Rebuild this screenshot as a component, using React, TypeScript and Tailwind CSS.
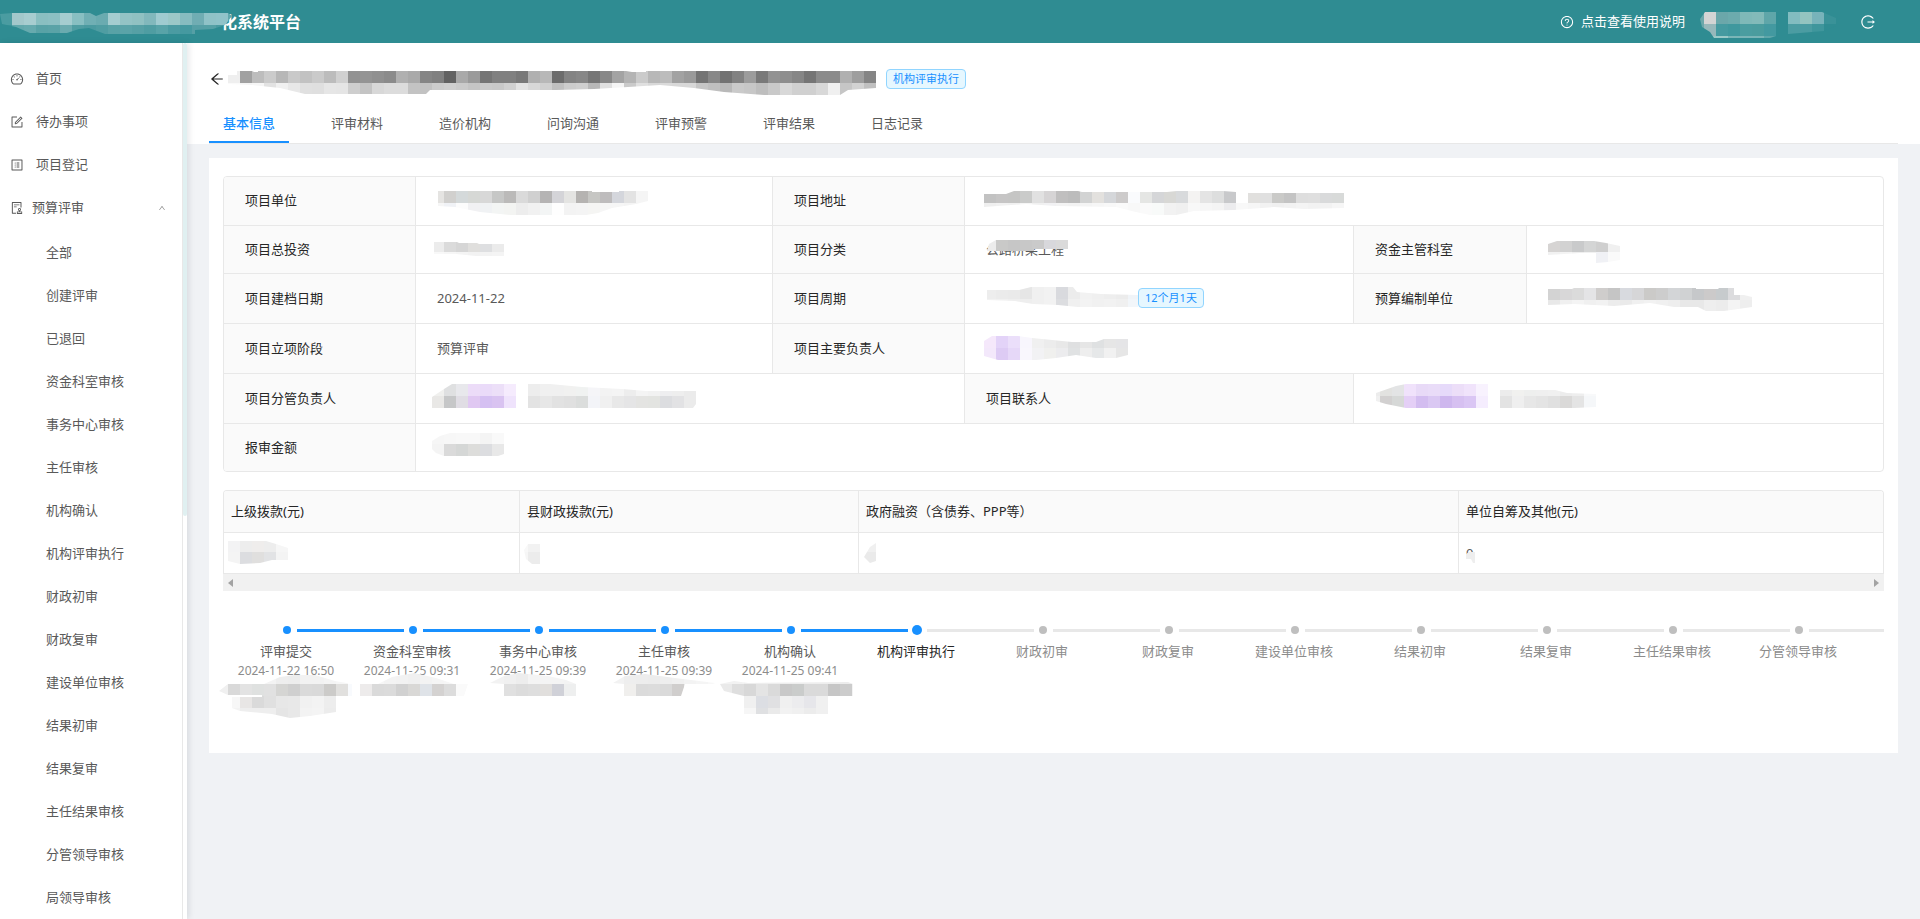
import { useId, useState } from "react";
import type { ReactNode } from "react";
import {
  AiOutlineArrowLeft,
  AiOutlineAudit,
  AiOutlineDashboard,
  AiOutlineForm,
  AiOutlineLogout,
  AiOutlineProfile,
  AiOutlineQuestionCircle,
  AiOutlineUp,
} from "react-icons/ai";

const CELL = 12;

interface MosaicRow {
  x: number;
  y: number;
  colors: string;
}

interface MosaicProps {
  x: number;
  y: number;
  width: number;
  height?: number;
  rows: MosaicRow[];
  outline: string;
  className?: string;
}

// two digits are a shade of grey, six digits a full colour
const toFill = (color: string) =>
  `#${color.length === 2 ? color.repeat(3) : color}`;

const Mosaic = ({
  x,
  y,
  width,
  height = 40,
  rows,
  outline,
  className = "",
}: MosaicProps) => {
  const id = useId();
  return (
    <svg
      width={width}
      height={height}
      viewBox={`${x} ${y} ${width} ${height}`}
      shapeRendering="crispEdges"
      aria-hidden="true"
      className={`block shrink-0 overflow-visible ${className}`}
    >
      <clipPath id={id}>
        <path d={outline} />
      </clipPath>
      <g clipPath={`url(#${id})`}>
        {rows.map((row) =>
          row.colors
            .split(" ")
            .map((color, i) => (
              <rect
                key={`${row.y}-${i}`}
                x={row.x + i * CELL}
                y={row.y}
                width={CELL}
                height={CELL}
                fill={toFill(color)}
              />
            ))
        )}
      </g>
    </svg>
  );
};

const subMenu = [
  "全部",
  "创建评审",
  "已退回",
  "资金科室审核",
  "事务中心审核",
  "主任审核",
  "机构确认",
  "机构评审执行",
  "财政初审",
  "财政复审",
  "建设单位审核",
  "结果初审",
  "结果复审",
  "主任结果审核",
  "分管领导审核",
  "局领导审核",
];

const tabs = [
  "基本信息",
  "评审材料",
  "造价机构",
  "问询沟通",
  "评审预警",
  "评审结果",
  "日志记录",
];

interface StepValues {
  title: string;
  date?: string;
  status: "finish" | "process" | "wait";
  operator?: ReactNode;
}

const steps: StepValues[] = [
  {
    title: "评审提交",
    date: "2024-11-22 16:50",
    status: "finish",
    operator: (
      <Mosaic
        x={223}
        y={681}
        width={126}
        rows={[
          { x: 252, y: 672, colors: "f5 f3 ee ed f2 f2 f4 f6" },
          { x: 216, y: 684, colors: "f0 d9 e3 dfe1e0 e1 d5d5d3 cf da d9 cccbc9 e1e0de f8fafd" },
          { x: 228, y: 696, colors: "f7 e8e6e5 da e0 e7 e8 f1 f3 ed e0dfdd eeeff0" },
          { x: 228, y: 708, colors: "f3 ee ee ee e5 e8 f3 f4 ec ea f8f9fb" },
        ]}
        outline="M219 691L228 684H264L280 677L295 675H315L335 681L352 684V696H336V712L310 716L290 718L272 714L240 711L232 708V697H262V695H228Z"
      />
    ),
  },
  {
    title: "资金科室审核",
    date: "2024-11-25 09:31",
    status: "finish",
    operator: (
      <Mosaic
        x={349}
        y={681}
        width={126}
        rows={[
          { x: 372, y: 672, colors: "f6 f3 f2 f0 f3 f5 f6" },
          { x: 360, y: 684, colors: "edebeb da db d1 d9d8d6 dfe3e8 d4d2d1 dc fa" },
        ]}
        outline="M360 684h18l14-7 22-4 22 5 18 6h14l-4 12H360z"
      />
    ),
  },
  {
    title: "事务中心审核",
    date: "2024-11-25 09:39",
    status: "finish",
    operator: (
      <Mosaic
        x={475}
        y={681}
        width={126}
        rows={[
          { x: 480, y: 672, colors: "f2 f2 f0 ed f4 f4 f4 f3 f5" },
          { x: 504, y: 684, colors: "e0 dc de e1dfdd d0d1d8 eeefef" },
        ]}
        outline="M490 683l14-7 14-3 30 3 18 4 10 4v12h-72v-12z"
      />
    ),
  },
  {
    title: "主任审核",
    date: "2024-11-25 09:39",
    status: "finish",
    operator: (
      <Mosaic
        x={601}
        y={681}
        width={126}
        rows={[
          { x: 612, y: 672, colors: "f2 ee ed ec ee f0 f3 f5 f8" },
          { x: 624, y: 684, colors: "f0efed db dc da d0cecd e8 f4" },
        ]}
        outline="M613 683l12-7 20-2 30 4 40 5-2 1h-28l-4 12h-57v-12z"
      />
    ),
  },
  {
    title: "机构确认",
    date: "2024-11-25 09:41",
    status: "finish",
    operator: (
      <Mosaic
        x={727}
        y={681}
        width={126}
        rows={[
          { x: 720, y: 672, colors: "f2 f2 ee ee ee ee ee ee ee ee ec ec" },
          { x: 720, y: 684, colors: "ea de d8 e4 da c8 cacccb da da c6 cc f3" },
          { x: 744, y: 696, colors: "f0 dcdee3 e0e0e2 f0 ececee e6e6ea f0" },
          { x: 744, y: 708, colors: "f6 dfe0e2 ea f2 f0 ec f0" },
        ]}
        outline="M720 684l14-3 14 2 100-1 5 2v12h-25v18h-84v-18l-20-5z"
      />
    ),
  },
  { title: "机构评审执行", status: "process" },
  { title: "财政初审", status: "wait" },
  { title: "财政复审", status: "wait" },
  { title: "建设单位审核", status: "wait" },
  { title: "结果初审", status: "wait" },
  { title: "结果复审", status: "wait" },
  { title: "主任结果审核", status: "wait" },
  { title: "分管领导审核", status: "wait" },
];

const titleColor = {
  finish: "text-[#595959]",
  process: "text-[#262626]",
  wait: "text-[#8c8c8c]",
};

const dotColor = {
  finish: "bg-[#1890ff]",
  process: "bg-[#1890ff]",
  wait: "bg-[#bfbfbf]",
};

const lineColor = {
  finish: "bg-[#1890ff]",
  process: "bg-[#e8e8e8]",
  wait: "bg-[#e8e8e8]",
};

const Tag = ({ children }: { children: ReactNode }) => (
  <span className="h-5 px-[6px] rounded-sm border border-[#91d5ff] bg-[#e6f7ff] text-[11px] leading-[18px] text-[#1890ff] whitespace-nowrap">
    {children}
  </span>
);

const Label = ({ colSpan, children }: { colSpan?: number; children: ReactNode }) => (
  <th
    scope="row"
    colSpan={colSpan}
    className="px-[21px] pb-[2px] text-left font-normal text-[#262626] bg-[#fafafa] border-r border-b border-[#e8e8e8]"
  >
    {children}
  </th>
);

const Value = ({ colSpan, children }: { colSpan?: number; children: ReactNode }) => (
  <td
    colSpan={colSpan}
    className="px-[21px] pb-[2px] text-[#595959] border-r border-b border-[#e8e8e8] last:border-r-0"
  >
    {children}
  </td>
);

const Header = () => (
  <header className="flex items-center justify-between h-[43px] shrink-0 bg-[#2f8c92] text-white">
    <div className="flex items-center">
      <Mosaic
        x={0}
        y={1}
        width={221}
        className="relative"
        rows={[
          {
            x: 0,
            y: 12,
            colors:
              "4a9ca1 a3c8cb a8cdd0 8abfc1 8cc0c3 a5cdd0 88bfc2 70afb4 6aabb0 a5cdd0 93c3c5 90c1c2 82b8bc a0cbd0 9bc8c8 87bcc0 70adb3 8fc2c7 90c3c9 5fa8ad",
          },
          {
            x: 0,
            y: 24,
            colors:
              "3c949a 62a8ac 66aaae 58a2a6 5aa3a7 6aabaf 4f9da2 4a9aa0 4f9da2 58a2a6 5aa3a8 56a0a5 4f9da2 58a3a8 4b9ba2 4599a0 559fa5 55a0a5 4a9aa0 3c949a",
          },
        ]}
        outline="M0 13l12-1h78l6 3 8-3h124l4 3-7 9-12 4-18 1v4h-90l-16-6-10 1-12 4H30l-14-6-14-3z"
      />
      <h1 className="text-[16px] leading-6 font-bold">化系统平台</h1>
    </div>
    <div className="flex items-center pr-[44px]">
      <a href="#help" className="flex items-center gap-[7px] text-[13px]">
        <AiOutlineQuestionCircle className="size-[14px]" />
        点击查看使用说明
      </a>
      <Mosaic
        x={1685}
        y={2}
        width={175}
        rows={[
          {
            x: 1692,
            y: 12,
            colors: "6ba7aa d4d4d4 6ba7aa 6cabad 7fb9b8 82bab9 5fa6a9 2f8c92 82bcc0 94c4c0 78b3ba 3a9298",
          },
          {
            x: 1692,
            y: 24,
            colors: "6ba7aa 97b8bb 459aa0 3f989e 4a9da0 4a9c9e 4399a0 2f8c92 4b9ca2 4b9ca2 3f969c 2f8c92",
          },
          { x: 1704, y: 36, colors: "9ccac8 9ccac8 7ab5b7 7ab5b7 7ab5b7 5fa6a9" },
        ]}
        outline="M1700 19l5-7h71v24l-6 2h-56l-4-6-8-5zM1788 12h34l14 6v8l-12 5-36 3z"
      />
      <button type="button" aria-label="退出登录">
        <AiOutlineLogout className="size-4" />
      </button>
    </div>
  </header>
);

const Sidebar = () => {
  const [isOpen, setIsOpen] = useState<boolean>(true);
  const itemClass = "flex items-center gap-3 h-[43px] pl-[10px]";

  return (
    <aside className="relative z-10 flex w-[187px] shrink-0 bg-white shadow-[2px_0_6px_rgba(0,21,41,0.1)]">
      <nav className="flex-1 pt-[14px] overflow-hidden border-r border-[#e8e8e8] text-[13px] text-[#595959]">
        <a href="#home" className={itemClass}>
          <AiOutlineDashboard className="size-[14px]" />
          首页
        </a>
        <a href="#todo" className={itemClass}>
          <AiOutlineForm className="size-[14px]" />
          待办事项
        </a>
        <a href="#register" className={itemClass}>
          <AiOutlineProfile className="size-[14px]" />
          项目登记
        </a>
        <button
          type="button"
          aria-expanded={isOpen}
          onClick={() => setIsOpen(!isOpen)}
          className="flex items-center gap-2 w-full h-[43px] pl-[10px] pr-4"
        >
          <AiOutlineAudit className="size-[14px]" />
          预算评审
          <AiOutlineUp className="size-2 ml-auto text-[#8c8c8c]" />
        </button>
        {isOpen && (
          <ul className="pt-[2px]">
            {subMenu.map((item) => (
              <li key={item}>
                <a href={`#${item}`} className="flex items-center h-[43px] pl-[46px]">
                  {item}
                </a>
              </li>
            ))}
          </ul>
        )}
      </nav>
      <div className="w-1">
        <div className="h-[54%] rounded-sm bg-[#e0f0f1]" />
      </div>
    </aside>
  );
};

const PageHeader = () => {
  const [activeTab, setActiveTab] = useState<string>(tabs[0]);

  return (
    <div className="px-[22px] pt-[26px] bg-white">
      <div className="flex items-center h-5">
        <button type="button" aria-label="返回" className="text-[#262626]">
          <AiOutlineArrowLeft className="size-4" />
        </button>
        <Mosaic
          x={225}
          y={60}
          width={661}
          rows={[
            {
              x: 228,
              y: 72,
              colors:
                "ef a1 bd cb b7 c9 c2 ca bc d0 92 94 90 8b b0 a9 85 80 62 a9 9a 75 80 80 78 b0 b8 6c 83 87 76 88 a3 b4 cb b8 bc a2 9a 74 88 72 82 9c 79 92 8e 86 75 8b 8b b0 9e 85",
            },
            {
              x: 228,
              y: 84,
              colors:
                "fa f4 f6 e2 f0 e8 e0 df e6 e5 ce c4 d8 dc dc c3 c2 cc cf cb c5 ca c8 d0 e2 d8 d0 c0 cc cf b8 e0 f5 ca e0 d8 da d8 d8 c6 c0 b9 ca c7 be c9 d8 d0 d0 d8 f0 c6 d2 c0",
            },
          ]}
          outline="M228 76h9v-4h15l2 1h4v-1h368l6 1h14v-1h230v17l-28 2-8 5h-76l-40-3-30-4-34-3-32 2-34 2-38 1H430l-4 4H305l-25-6-28-3-24-1z"
        />
        <Tag>机构评审执行</Tag>
      </div>
      <div role="tablist" className="flex gap-7 mt-[17px] border-b border-[#e8e8e8] text-[13px]">
        {tabs.map((tab) => (
          <button
            key={tab}
            type="button"
            role="tab"
            aria-selected={tab === activeTab}
            onClick={() => setActiveTab(tab)}
            className={`h-[37px] px-[14px] border-b-2 ${
              tab === activeTab
                ? "border-[#1890ff] text-[#1890ff] font-medium"
                : "border-transparent text-[#595959]"
            }`}
          >
            {tab}
          </button>
        ))}
      </div>
    </div>
  );
};

const ProjectInfo = () => (
  <div className="rounded-sm border border-[#e8e8e8] overflow-hidden">
    <table className="w-full table-fixed border-separate border-spacing-0 text-[13px] leading-5">
      <colgroup>
        <col className="w-[192px]" />
        <col className="w-[357px]" />
        <col className="w-[192px]" />
        <col className="w-[389px]" />
        <col className="w-[173px]" />
        <col className="w-[356px]" />
      </colgroup>
      <tbody>
        <tr className="h-[49px]">
          <Label>项目单位</Label>
          <Value>
            <Mosaic
              x={437}
              y={181}
              width={216}
              rows={[
                { x: 432, y: 192, colors: "e5e4e2 d1d0ce d4d9da d6d8d5 d8 c6c7c6 bbbab9 da d0 b5b4b4 d4d4d8 e4e4e2 b5b3b1 c6c6c3 bebcbd d4d6dc e3 f5" },
                { x: 432, y: 204, colors: "f6 f0f2f6 fc f1f1f3 f0f2f4 f3f5f4 f3f4f2 ed f1 f3f5f5 fe f3 f4 f5f5f3 f6 f6 f4 f4" },
              ]}
              outline="M438 192h154v1h27v-1h29v10l-12 3-24 4-14 5-18 3h-60l-40-4-25-5-17-1z"
            />
          </Value>
          <Label>项目地址</Label>
          <Value colSpan={3}>
            <Mosaic
              x={986}
              y={181}
              width={360}
              rows={[
                { x: 984, y: 192, colors: "c2 c6c5c5 c5c5c4 cacbca e1 d6d4d5 c0bfbf bc d2d3d3 e3e1de d5d7da cdcbcb fafbfd e5e6e4 d5d6d8 d8d8d5 d8dadc f4f3f2 e4 dddede c8c9cb ff e1e0de e0 cacac8 c4 de df d9dadb d8dad9" },
                { x: 984, y: 204, colors: "ef f1 f0 f5 f0 f1f1f3 f3 f2 f4 f6 f8 fa f8 fa f8faf9 f2 f0 f8 f6 f4 ececee f8 f6 f2 f0 f2 f4 f2 f2 f6" },
              ]}
              outline="M984 195h22l8-3h64l4 1h85l10-1h46l26 2h95v15l-40 1-30-2-40 3-40 1-18 4h-26l-14-3-20-5-60-1-30-2L984 208z"
            />
          </Value>
        </tr>
        <tr className="h-12">
          <Label>项目总投资</Label>
          <Value>
            <Mosaic
              x={437}
              y={229}
              width={72}
              rows={[
                { x: 432, y: 240, colors: "ec db d6 e0dfdd dedfe1 eb" },
                { x: 432, y: 252, colors: "f8 f6 f4 f2 f3 f4" },
              ]}
              outline="M434 242h23l2 1h18l2 1h25v12h-28l-20-2h-22z"
            />
          </Value>
          <Label>项目分类</Label>
          <Value>
            <div className="relative">
              公路桥梁工程
              <div className="absolute inset-0">
                <Mosaic
                  x={986}
                  y={239}
                  width={84}
                  height={20}
                  rows={[{ x: 984, y: 239, colors: "ec c9c9c8 c6 c8 ca d8d8dc da e0e1e3" }]}
                  outline="M987 251l2-7 7-4h72v9h-34v2h-36z"
                />
              </div>
            </div>
          </Value>
          <Label>资金主管科室</Label>
          <Value>
            <Mosaic
              x={1548}
              y={229}
              width={72}
              rows={[
                { x: 1548, y: 240, colors: "d6d4d3 d2 c9cacb d4d5d5 cf f0" },
                { x: 1548, y: 252, colors: "f1 f3 ee f1 f0f1f5 fa" },
              ]}
              outline="M1548 244l9-3h37l12 2 14 3v14l-12 2-12 1v-10h-16l-32 2z"
            />
          </Value>
        </tr>
        <tr className="h-[50px]">
          <Label>项目建档日期</Label>
          <Value>2024-11-22</Value>
          <Label>项目周期</Label>
          <Value>
            <div className="flex items-center">
              <Mosaic
                x={986}
                y={279}
                width={152}
                rows={[
                  { x: 984, y: 288, colors: "ed eb ea e6 f0 f2 d9dade ec f2 f0 ee ec f0f4f8" },
                  { x: 984, y: 300, colors: "f2 f1 ef ee f0 f2 dcdde0 f0 f3 f1 f2 f0 f2f6fa" },
                ]}
                outline="M987 291h32l12-3h42l4 5 24 2 37 1v12h-60l-20-2-25-1-18-3-28-1z"
              />
              <Tag>12个月1天</Tag>
            </div>
          </Value>
          <Label>预算编制单位</Label>
          <Value>
            <Mosaic
              x={1548}
              y={278}
              width={204}
              rows={[
                { x: 1548, y: 288, colors: "d3 d8d7d8 db e4e4e6 cfcdcc c5 d8dadf d6d6d8 cbcac8 cd d3d5d7 d0d2d3 c6c8ca cccaca c7cbcd dcdcde f0" },
                { x: 1548, y: 300, colors: "e8 f0 f4 f0 f2 ec ea f0 f2 f0 ee e8 e8 ee ec f4 ee" },
              ]}
              outline="M1548 289h24l2-1h122v1h22l1-1h15v7h10l8 2v10l-14 2-14 2h-18l-8-4h-24l-24-4-36 3-40-2-26 1z"
            />
          </Value>
        </tr>
        <tr className="h-[50px]">
          <Label>项目立项阶段</Label>
          <Value>预算评审</Value>
          <Label>项目主要负责人</Label>
          <Value colSpan={3}>
            <Mosaic
              x={986}
              y={328}
              width={144}
              rows={[
                { x: 984, y: 336, colors: "f5e8fb e3d3f8 ebdffa f8f6fd f0 ec e8 dfe0e1 e6 dfe1e2 e6 e5e5e7" },
                { x: 984, y: 348, colors: "f3e8fb ddcbf4 e6d8f8 f9f7fd f2f2f4 f0f0ee ececee e0e2e3 ee e6e8e9 f1 e6" },
              ]}
              outline="M984 341l8-5h26l14 2 20 2 20 2h24l8-3h24v16l-12 3h-20l-20-3-20 3-20 2h-38l-14-4z"
            />
          </Value>
        </tr>
        <tr className="h-[50px]">
          <Label>项目分管负责人</Label>
          <Value colSpan={2}>
            <Mosaic
              x={437}
              y={378}
              width={264}
              rows={[
                { x: 432, y: 384, colors: "f0f0ee dfe0e1 e8e8ec ecdcf8 eadbf9 ecdff8 f5ebfd ff ed f0 f0 f1f1f0 f0f2f1 f5f5f8 f3 f4 ed f4 f2 eeeef0 ee eb" },
                { x: 432, y: 396, colors: "e9e8e6 c6c7c8 e0dde4 e0c8f2 d5c0f2 d9c3f1 efe3fc ff e3 e7 e2 e0 dbdddc f3f4f8 f0 e8 e5e5e6 e4e4e2 e3e4e1 dcdde0 e2e2e4 eb" },
              ]}
              outline="M432 397l12-8 8-5h98l32 3 40 2 24 2h50v13l-3 4H432z"
            />
          </Value>
          <Label>项目联系人</Label>
          <Value colSpan={2}>
            <Mosaic
              x={1375}
              y={378}
              width={224}
              rows={[
                { x: 1368, y: 384, colors: "ec e2e2e0 e3e4e5 f0e2fb e8daf7 e9dcf8 e6dafa ecdef8 f0e3fb f8f2fe ff ec f1f1ef eeefee ef f0 ec ee f8f9fa" },
                { x: 1368, y: 396, colors: "f0 d2d0d0 d6d8d7 e4cff6 d3bdf0 dac8f3 ceb7ee d6c0f1 dac6f4 f5edfe ff e3 ef e7 e4 e0 dad9d8 e4 f5f7f9" },
              ]}
              outline="M1376 393l20-7 10-2h84v6h65l12 3 29 1v13l-22 1h-168l-20-4-10-3z"
            />
          </Value>
        </tr>
        <tr className="h-[47px] [&>*]:border-b-0">
          <Label>报审金额</Label>
          <Value colSpan={5}>
            <Mosaic
              x={437}
              y={427}
              width={72}
              rows={[
                { x: 432, y: 432, colors: "f6 f7 f8 f8 f4 f9" },
                { x: 432, y: 444, colors: "f4 da d5d7d6 dddddb dcdde0 e8" },
              ]}
              outline="M432 441l8-5 10-3h54v21l-6 2h-54l-8-3-4-4z"
            />
          </Value>
        </tr>
      </tbody>
    </table>
  </div>
);

const FundTable = () => {
  const headClass =
    "px-[7px] pb-[2px] text-left font-normal text-[#262626] bg-[#fafafa] border-r border-b border-[#e8e8e8] last:border-r-0";
  const cellClass =
    "px-[7px] border-r border-b border-[#e8e8e8] last:border-r-0";

  return (
    <div>
      <div className="rounded-t-sm border border-b-0 border-[#e8e8e8] overflow-hidden">
        <table className="w-full table-fixed border-separate border-spacing-0 text-[13px] leading-5 text-[#595959]">
          <colgroup>
            <col className="w-[296px]" />
            <col className="w-[339px]" />
            <col className="w-[600px]" />
            <col className="w-[424px]" />
          </colgroup>
          <thead>
            <tr className="h-[42px]">
              <th className={headClass}>上级拨款(元)</th>
              <th className={headClass}>县财政拨款(元)</th>
              <th className={headClass}>政府融资（含债券、PPP等）</th>
              <th className={headClass}>单位自筹及其他(元)</th>
            </tr>
          </thead>
          <tbody>
            <tr className="h-[41px]">
              <td className={cellClass}>
                <Mosaic
                  x={231}
                  y={533}
                  width={60}
                  rows={[
                    { x: 228, y: 540, colors: "f3f3f4 ed efedec ed f6" },
                    { x: 228, y: 552, colors: "f4 dcdde0 e0dfde e2e3e5 f4" },
                  ]}
                  outline="M228 541h38l10 3 12 4v12h-16l-12 3-20 1-12-3z"
                />
              </td>
              <td className={cellClass}>
                <Mosaic
                  x={527}
                  y={533}
                  width={20}
                  rows={[
                    { x: 516, y: 540, colors: "f8 f2" },
                    { x: 516, y: 552, colors: "f6 ec" },
                  ]}
                  outline="M524 550l4-6h12v20h-8l-6-5z"
                />
              </td>
              <td className={cellClass}>
                <Mosaic
                  x={866}
                  y={533}
                  width={20}
                  rows={[
                    { x: 864, y: 540, colors: "f0 ff" },
                    { x: 864, y: 552, colors: "ea ff" },
                  ]}
                  outline="M864 557l6-10 6-4v18l-6 2z"
                />
              </td>
              <td className={cellClass}>
                <div className="relative">
                  0
                  <div className="absolute inset-0">
                    <Mosaic
                      x={1467}
                      y={543}
                      width={20}
                      height={20}
                      rows={[{ x: 1464, y: 552, colors: "ee" }]}
                      outline="M1467 554l3-2h6v11h-2l-2-4h-5z"
                    />
                  </div>
                </div>
              </td>
            </tr>
          </tbody>
        </table>
      </div>
      <div className="flex items-center justify-between h-[17px] px-[5px] bg-[#f1f1f1] text-[#a3a3a3]">
        <svg width="5" height="8" viewBox="0 0 5 8" fill="currentColor" aria-hidden="true">
          <path d="M5 0v8L0 4z" />
        </svg>
        <svg width="5" height="8" viewBox="0 0 5 8" fill="currentColor" aria-hidden="true">
          <path d="M0 0v8l5-4z" />
        </svg>
      </div>
    </div>
  );
};

const Steps = () => (
  <ol className="grid grid-cols-[repeat(12,126fr)_149fr] mt-[34px]">
    {steps.map((step, i) => (
      <li key={step.title}>
        <div className="flex items-center h-[10px] pl-[59px]">
          <span className="flex items-center justify-center size-[10px] shrink-0">
            <span
              className={`rounded-full ${dotColor[step.status]} ${
                step.status === "process" ? "size-[10px]" : "size-2"
              }`}
            />
          </span>
          <span
            className={`flex-1 h-[3px] ml-[5px] ${lineColor[step.status]} ${
              i < steps.length - 1 ? "-mr-[55px]" : ""
            }`}
          />
        </div>
        <div className="flex flex-col items-center w-[126px] pt-[6px]">
          <p className={`text-[13px] leading-5 ${titleColor[step.status]}`}>{step.title}</p>
          {step.date && (
            <p className="text-[12px] leading-5 text-[#8c8c8c] whitespace-nowrap">{step.date}</p>
          )}
          {step.operator}
        </div>
      </li>
    ))}
  </ol>
);

export default function App() {
  return (
    <div className="flex flex-col h-screen overflow-hidden bg-[#f0f2f5] font-['Noto_Sans','Noto_Sans_CJK_SC',sans-serif]">
      <Header />
      <div className="flex flex-1 min-h-0">
        <Sidebar />
        <main className="flex-1 min-w-0 overflow-hidden">
          <PageHeader />
          <section className="mx-[22px] mt-[14px] px-[14px] pt-[18px] pb-8 bg-white">
            <div className="flex flex-col gap-[18px]">
              <ProjectInfo />
              <FundTable />
            </div>
            <Steps />
          </section>
        </main>
      </div>
    </div>
  );
}
